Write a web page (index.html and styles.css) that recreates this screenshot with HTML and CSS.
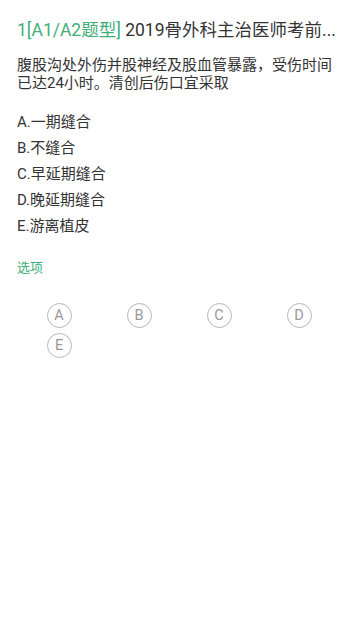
FILE: index.html
```html
<!DOCTYPE html>
<html lang="zh">
<head>
<meta charset="utf-8">
<link rel="stylesheet" href="styles.css">
</head>
<body>
<div class="page">
  <div class="title"><span class="type">1[A1/A2题型]</span> 2019骨外科主治医师考前...</div>
  <div class="question">腹股沟处外伤并股神经及股血管暴露，受伤时间已达24小时。清创后伤口宜采取</div>
  <ul class="options">
    <li>A.一期缝合</li>
    <li>B.不缝合</li>
    <li>C.早延期缝合</li>
    <li>D.晚延期缝合</li>
    <li>E.游离植皮</li>
  </ul>
  <div class="label">选项</div>
  <div class="choices">
    <div class="cell"><span class="circle">A</span></div>
    <div class="cell"><span class="circle">B</span></div>
    <div class="cell"><span class="circle">C</span></div>
    <div class="cell"><span class="circle">D</span></div>
    <div class="cell"><span class="circle">E</span></div>
  </div>
</div>
</body>
</html>
```
FILE: styles.css
```css
html, body {
  margin: 0;
  padding: 0;
  background: #ffffff;
}
body {
  font-family: Roboto, "Noto Sans CJK SC", sans-serif;
  color: #333333;
  width: 360px;
  height: 640px;
  overflow: hidden;
}
.page {
  padding: 18px 17px 0 17px;
}
.title {
  font-size: 17.5px;
  line-height: 24px;
  white-space: nowrap;
  color: #333333;
}
.type {
  color: #3fae78;
}
.question {
  margin-top: 15px;
  font-size: 15px;
  line-height: 17.5px;
  color: #333333;
}
.options {
  list-style: none;
  margin: 17px 0 0 0;
  padding: 0;
}
.options li {
  font-size: 15px;
  line-height: 26px;
  color: #333333;
}
.label {
  margin-top: 20px;
  font-size: 13px;
  line-height: 18px;
  color: #3fae78;
}
.choices {
  margin-top: 26px;
  padding: 0 2px;
  display: grid;
  grid-template-columns: repeat(4, 80px);
  row-gap: 5px;
}
.cell {
  display: flex;
  justify-content: center;
}
.circle {
  box-sizing: border-box;
  width: 25px;
  height: 25px;
  border: 1.5px solid #b8b8b8;
  border-radius: 50%;
  display: flex;
  align-items: center;
  justify-content: center;
  font-size: 14.5px;
  color: #999999;
}
```
